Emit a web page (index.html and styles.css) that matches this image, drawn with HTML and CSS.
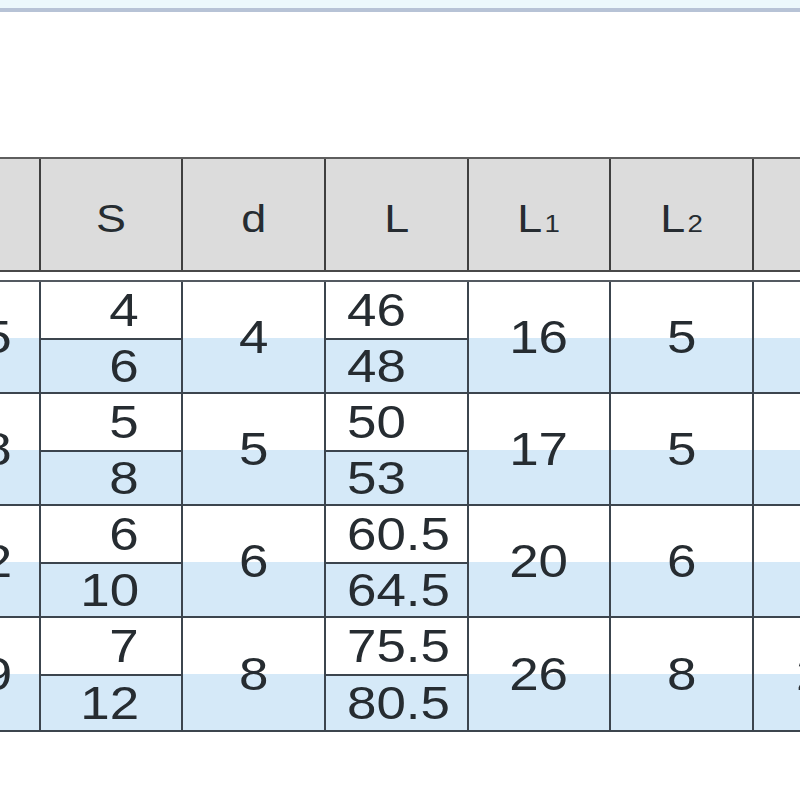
FILE: index.html
```html
<!DOCTYPE html>
<html>
<head>
<meta charset="utf-8">
<link rel="stylesheet" href="styles.css">
</head>
<body>
<div class="topbar"></div>
<div class="spec">
  <div class="row head">
    <div class="cell"></div>
    <div class="cell"><span class="t">S</span></div>
    <div class="cell"><span class="t">d</span></div>
    <div class="cell"><span class="t">L</span></div>
    <div class="cell"><span class="t">L<sub class="idx">1</sub></span></div>
    <div class="cell"><span class="t">L<sub class="idx">2</sub></span></div>
    <div class="cell"></div>
  </div>
  <div class="body">
    <div class="row">
      <div class="cell c0"><span class="t">5</span></div>
      <div class="cell split s"><div class="sub"><span class="t">4</span></div><div class="sub"><span class="t">6</span></div></div>
      <div class="cell"><span class="t">4</span></div>
      <div class="cell split l"><div class="sub"><span class="t">46</span></div><div class="sub"><span class="t">48</span></div></div>
      <div class="cell"><span class="t">16</span></div>
      <div class="cell"><span class="t">5</span></div>
      <div class="cell"></div>
    </div>
    <div class="row">
      <div class="cell c0"><span class="t">8</span></div>
      <div class="cell split s"><div class="sub"><span class="t">5</span></div><div class="sub"><span class="t">8</span></div></div>
      <div class="cell"><span class="t">5</span></div>
      <div class="cell split l"><div class="sub"><span class="t">50</span></div><div class="sub"><span class="t">53</span></div></div>
      <div class="cell"><span class="t">17</span></div>
      <div class="cell"><span class="t">5</span></div>
      <div class="cell"></div>
    </div>
    <div class="row">
      <div class="cell c0"><span class="t">12</span></div>
      <div class="cell split s"><div class="sub"><span class="t">6</span></div><div class="sub"><span class="t">10</span></div></div>
      <div class="cell"><span class="t">6</span></div>
      <div class="cell split l"><div class="sub"><span class="t">60.5</span></div><div class="sub"><span class="t">64.5</span></div></div>
      <div class="cell"><span class="t">20</span></div>
      <div class="cell"><span class="t">6</span></div>
      <div class="cell"></div>
    </div>
    <div class="row last">
      <div class="cell c0"><span class="t">19</span></div>
      <div class="cell split s"><div class="sub"><span class="t">7</span></div><div class="sub"><span class="t">12</span></div></div>
      <div class="cell"><span class="t">8</span></div>
      <div class="cell split l"><div class="sub"><span class="t">75.5</span></div><div class="sub"><span class="t">80.5</span></div></div>
      <div class="cell"><span class="t">26</span></div>
      <div class="cell"><span class="t">8</span></div>
      <div class="cell edge"><span class="t">2</span></div>
    </div>
  </div>
</div>
</body>
</html>
```

FILE: styles.css
```css
html, body {
  margin: 0;
  padding: 0;
  background: #ffffff;
  overflow: hidden;
}

body {
  font-family: "Liberation Sans", Arial, sans-serif;
  color: #262c31;
  width: 800px;
  height: 800px;
}

.topbar {
  height: 8px;
  background: #ecf8fc;
  border-bottom: 4px solid #b7c3d6;
}

.spec {
  margin-top: 145px;
}

.row {
  display: grid;
  grid-template-columns: 41px 142px 143px 143px 142px 143px 1fr;
  box-sizing: border-box;
}

.cell {
  box-sizing: border-box;
  border-right: 2px solid #3e454c;
  display: flex;
  align-items: center;
  justify-content: center;
  overflow: visible;
  min-width: 0;
}

.cell:last-child {
  border-right: 0;
}

.head {
  height: 115px;
  background: #dcdcdc;
  border-top: 2px solid #5e5e5e;
  border-bottom: 2px solid #484848;
}

.head .cell {
  font-size: 39px;
  padding-top: 8px;
  border-right-color: #3f3f3f;
}

.idx {
  font-size: 24px;
  vertical-align: baseline;
  margin-left: 2px;
}

.body {
  margin-top: 8px;
  border-top: 2px solid #545a61;
}

.body .row {
  height: 112px;
  border-bottom: 2px solid #3c454e;
  background: linear-gradient(#ffffff 56px, #d5e9f8 56px);
}

.body .row.last {
  height: 114px;
}

.body .cell {
  font-size: 46px;
  border-right-color: #3c454e;
}

.t {
  display: inline-block;
  line-height: 1;
  white-space: nowrap;
  transform: scaleX(1.15);
}

.split {
  flex-direction: column;
  align-items: stretch;
  justify-content: flex-start;
}

.sub {
  height: 56px;
  display: flex;
  align-items: center;
  box-sizing: border-box;
}

.sub + .sub {
  height: auto;
  flex: 1;
  border-top: 2px solid #3c454e;
}

.s .sub {
  justify-content: flex-end;
  padding-right: 42px;
}

.s .t {
  transform-origin: right center;
}

.l .sub {
  justify-content: flex-start;
  padding-left: 21px;
}

.l .t {
  transform-origin: left center;
}

.c0 {
  justify-content: flex-end;
  padding-right: 27px;
}

.c0 .t {
  transform-origin: right center;
}

.edge {
  justify-content: flex-start;
  padding-left: 42px;
}

.edge .t {
  transform-origin: left center;
}
```
